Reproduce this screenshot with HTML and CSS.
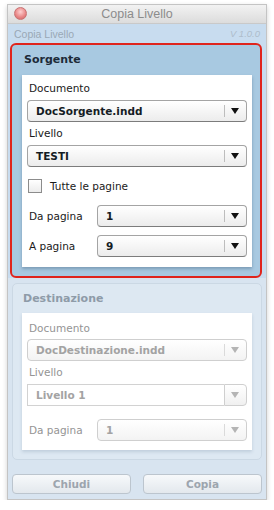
FILE: index.html
```html
<!DOCTYPE html>
<html lang="it">
<head>
  <meta charset="UTF-8">
  <title>Copia Livello</title>
  <link rel="stylesheet" href="styles.css">
</head>
<body>
  <div class="window">
    <div class="titlebar">
      <span class="close"></span>
      <span class="title">Copia Livello</span>
    </div>

    <div class="content">
      <div class="top-row">
        <span class="app-name">Copia Livello</span>
        <span class="version">V 1.0.0</span>
      </div>

      <!-- Sorgente -->
      <div class="panel source">
        <h3>Sorgente</h3>
        <div class="sheet">
          <div class="label">Documento</div>
          <div class="select"><span class="value">DocSorgente.indd</span><span class="arrow"></span></div>
          <div class="label">Livello</div>
          <div class="select"><span class="value">TESTI</span><span class="arrow"></span></div>
          <label class="check-row"><span class="checkbox"></span>Tutte le pagine</label>
          <div class="field-row">
            <span class="row-label">Da pagina</span>
            <div class="select"><span class="value">1</span><span class="arrow"></span></div>
          </div>
          <div class="field-row last">
            <span class="row-label">A pagina</span>
            <div class="select"><span class="value">9</span><span class="arrow"></span></div>
          </div>
        </div>
      </div>

      <!-- Destinazione (disabled) -->
      <div class="lower">
        <div class="panel target">
          <h3>Destinazione</h3>
          <div class="sheet">
            <div class="label">Documento</div>
            <div class="select"><span class="value">DocDestinazione.indd</span><span class="arrow"></span></div>
            <div class="label">Livello</div>
            <div class="combo"><span class="value">Livello 1</span><span class="combo-btn"><span class="arrow"></span></span></div>
            <div class="field-row last">
              <span class="row-label">Da pagina</span>
              <div class="select"><span class="value">1</span><span class="arrow"></span></div>
            </div>
          </div>
        </div>

        <div class="buttons">
          <button>Chiudi</button>
          <button>Copia</button>
        </div>
      </div>
    </div>
  </div>
</body>
</html>
```

FILE: styles.css
```css
body {
  margin: 0;
  background-color: #fff;
  font-family: "DejaVu Sans", Verdana, sans-serif;
  font-size: 10.5px;
}

.window {
  margin: 4px 0 0 7px;
  width: 258px;
  height: 494px;
  border: 1px solid #c4c4c4;
  box-shadow: 0 2px 5px rgba(0, 0, 0, 0.18);
  display: flex;
  flex-direction: column;
}

.titlebar {
  height: 18px;
  position: relative;
  display: flex;
  justify-content: center;
  align-items: center;
  background: linear-gradient(#f2f2f2, #dcdcdc);
  border-bottom: 1px solid #c9c9c9;
}

.title {
  font-family: "Liberation Sans", Arial, sans-serif;
  font-size: 12.5px;
  color: #8c8c8c;
}

.close {
  position: absolute;
  left: 6px;
  top: 2px;
  width: 11px;
  height: 11px;
  border-radius: 50%;
  background: radial-gradient(circle at 50% 35%, #ffd0d0, #e88484 60%, #c96464);
  border: 1px solid #c87272;
}

.content {
  flex: 1;
  display: flex;
  flex-direction: column;
  background-color: #c8dcef;
}

.top-row {
  display: flex;
  justify-content: space-between;
  align-items: center;
  height: 19px;
  padding: 0 6px 0 6px;
}

.app-name {
  font-family: "Liberation Sans", Arial, sans-serif;
  font-size: 10.5px;
  color: #9aa8b5;
}

.version {
  font-family: "Liberation Sans", Arial, sans-serif;
  font-style: italic;
  font-size: 9.5px;
  color: #aebccb;
}

.panel {
  border-radius: 5px;
}

.panel h3 {
  margin: 0;
  height: 30px;
  line-height: 30px;
  padding-left: 12px;
  font-size: 11px;
  font-weight: bold;
  color: #1d2b38;
}

.source {
  margin: 0 4px 0 2px;
  background-color: #a8c9e1;
  border: 2px solid #e0241c;
  border-radius: 6px;
  padding-bottom: 9px;
}

.sheet {
  margin: 0 8px 0 10px;
  background-color: #fff;
  padding: 6px 5px 10px 5px;
  box-shadow: 0 2px 3px rgba(40, 70, 100, 0.35);
}

.label {
  height: 14px;
  line-height: 14px;
  padding-left: 2px;
  margin-bottom: 5px;
  color: #1a1a1a;
}

.select {
  height: 20px;
  border: 1px solid #a4a4a4;
  border-bottom-color: #7c7c7c;
  border-radius: 4px;
  background: linear-gradient(#ffffff, #ececec);
  display: flex;
  align-items: center;
  margin-bottom: 4px;
}

.value {
  flex: 1;
  padding-left: 8px;
  font-weight: bold;
  color: #151c24;
  white-space: nowrap;
  overflow: hidden;
}

.arrow {
  width: 21px;
  height: 12px;
  border-left: 1px solid #bdbdbd;
  position: relative;
}

.arrow::after {
  content: "";
  position: absolute;
  left: 6px;
  top: 3px;
  border-left: 4px solid transparent;
  border-right: 4px solid transparent;
  border-top: 6px solid #111;
}

.check-row {
  display: flex;
  align-items: center;
  height: 16px;
  margin: 11px 0 11px 1px;
  color: #1a1a1a;
}

.checkbox {
  width: 12px;
  height: 12px;
  border: 1px solid #8c8c8c;
  background: linear-gradient(#fff, #ececec);
  margin-right: 8px;
}

.field-row {
  display: flex;
  align-items: center;
  margin-bottom: 8px;
}

.field-row.last {
  margin-bottom: 0;
}

.field-row .select {
  width: 148px;
  margin-bottom: 0;
}

.row-label {
  flex: 1;
  padding-left: 2px;
  color: #1a1a1a;
}

.lower {
  flex: 1;
  display: flex;
  flex-direction: column;
  background-color: #d8e4f0;
}

.target {
  margin: 5px 4px 0 4px;
  background-color: #dde8f2;
  border: 1px solid #cbd8e4;
  padding-bottom: 9px;
}

.target h3 {
  height: 29px;
  line-height: 29px;
  color: #8e9ba8;
  padding-left: 10px;
}

.target .sheet {
  margin: 0 9px 0 9px;
  padding: 8px 5px 9px 5px;
  box-shadow: 0 2px 3px rgba(60, 90, 120, 0.18);
}

.target .label {
  margin-bottom: 4px;
}

.target .label,
.target .row-label {
  color: #949494;
}

.target .select {
  border-color: #cfcfcf;
  background: linear-gradient(#ffffff, #f3f3f3);
}

.target .value {
  color: #a3a3a3;
}

.target .arrow {
  border-left-color: #dadada;
}

.target .arrow::after {
  border-top-color: #b4b4b4;
}

.combo {
  height: 22px;
  display: flex;
  align-items: stretch;
  margin: 5px 0 13px 0;
}

.combo .value {
  border: 1px solid #d2d2d2;
  border-right: none;
  line-height: 20px;
}

.combo-btn {
  width: 21px;
  border: 1px solid #cfcfcf;
  border-radius: 0 4px 4px 0;
  background: linear-gradient(#ffffff, #f0f0f0);
  display: flex;
  align-items: center;
}

.combo-btn .arrow {
  border-left: none;
  width: 21px;
}

.buttons {
  display: flex;
  gap: 12px;
  padding: 14px 4px 0 4px;
}

.buttons button {
  flex: 1;
  height: 20px;
  font-family: "DejaVu Sans", Verdana, sans-serif;
  font-size: 10.5px;
  font-weight: bold;
  color: #9da5ae;
  border: 1px solid #bcc5ce;
  border-radius: 4px;
  background: linear-gradient(#f7f9fb, #e3e8ed);
}
```
